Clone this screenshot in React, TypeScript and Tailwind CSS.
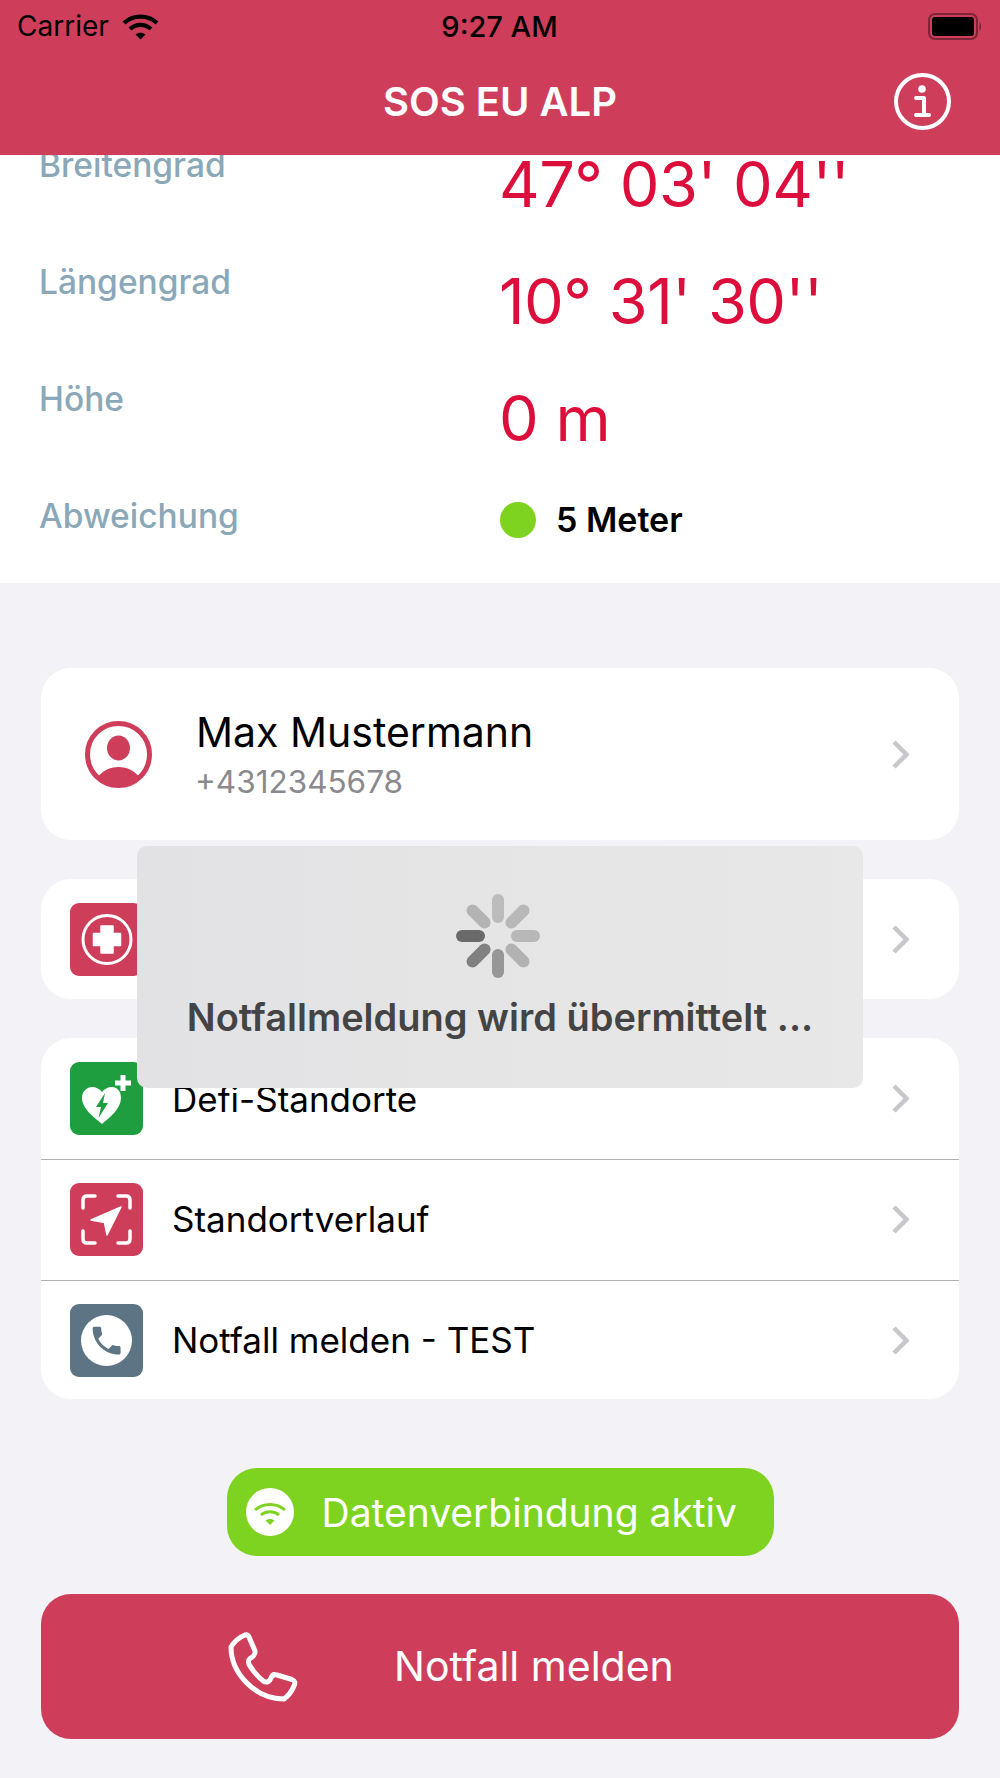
import type { ReactNode } from "react";

const font = "font-['Inter','Liberation_Sans',sans-serif]";

function StatusWifi() {
  return (
    <svg width="37" height="27" viewBox="0 0 37 27" fill="none" stroke="#000" strokeWidth="4.2">
      <path d="M2 10 C11 1.500 26 1.500 35 10" />
      <path d="M8 16 C14 10.500 23 10.500 29 16" />
      <path d="M18.500 26.500 L13.500 21.500 C16.500 19 20.500 19 23.500 21.500 Z" fill="#000" stroke="none" />
    </svg>
  );
}

function Battery() {
  return (
    <svg width="54" height="27" viewBox="0 0 54 27">
      <rect x="1" y="1" width="48" height="25" rx="6" fill="none" stroke="#000" strokeOpacity="0.4" strokeWidth="2" />
      <rect x="4" y="4" width="42" height="19" rx="3" fill="#000" />
      <path d="M51.500 9.500 C53.500 10.500 53.500 16.500 51.500 17.500 Z" fill="#000" fillOpacity="0.45" />
    </svg>
  );
}

function InfoIcon() {
  return (
    <svg width="57" height="57" viewBox="0 0 57 57" fill="none">
      <circle cx="28.500" cy="28.500" r="26.500" stroke="#fff" strokeWidth="4" />
      <circle cx="28" cy="16" r="3.800" fill="#fff" />
      <path d="M22 25 H30 V41 M22 42 H35" stroke="#fff" strokeWidth="4" strokeLinecap="round" strokeLinejoin="round" />
    </svg>
  );
}

function AvatarIcon() {
  return (
    <svg width="67" height="67" viewBox="0 0 67 67" className="shrink-0">
      <circle cx="33.500" cy="33.500" r="31" fill="none" stroke="#ce3e5b" strokeWidth="5" />
      <ellipse cx="33.500" cy="27" rx="11.500" ry="12.500" fill="#ce3e5b" />
      <path d="M13 56 C17 50 25 46 33.500 46 C42 46 50 50 54 56 C48 62 41 65 33.500 65 C26 65 19 62 13 56 Z" fill="#ce3e5b" />
    </svg>
  );
}

function MedicalIcon() {
  return (
    <svg width="73" height="73" viewBox="0 0 73 73">
      <circle cx="37" cy="36.500" r="24" fill="none" stroke="#fff" strokeWidth="3" />
      <path d="M31 23 H43 V30.500 H50.500 V42.500 H43 V50 H31 V42.500 H23.500 V30.500 H31 Z" fill="#fff" stroke="#fff" strokeWidth="1.500" strokeLinejoin="round" />
    </svg>
  );
}

function DefiIcon() {
  return (
    <svg width="73" height="73" viewBox="0 0 73 73">
      <path d="M32 62 C25 56 12 47 12 36 C12 29 17 25 22 25 C26 25 30 27 32 30 C34 27 38 25 42 25 C47 25 51 29 51 36 C51 47 39 56 32 62 Z" fill="#fff" />
      <path d="M35 31 L26 45 H31 L28.500 56 L38 41 H33 Z" fill="#1e9e3e" />
      <path d="M53 13 V29 M45 21 H61" stroke="#fff" strokeWidth="5" fill="none" />
    </svg>
  );
}

function LocationIcon() {
  return (
    <svg width="73" height="73" viewBox="0 0 73 73" fill="none">
      <path d="M13 25 V17 C13 14.500 14.500 13 17 13 H25 M48 13 H56 C58.500 13 60 14.500 60 17 V25 M13 48 V56 C13 58.500 14.500 60 17 60 H25 M48 60 H56 C58.500 60 60 58.500 60 56 V48" stroke="#fff" strokeWidth="3.500" strokeLinecap="round" />
      <path d="M51 24 L37 52 L34.500 39.500 L21 37 Z" fill="#fff" stroke="#fff" strokeWidth="1.500" strokeLinejoin="round" />
    </svg>
  );
}

function PhoneCircleIcon() {
  return (
    <svg width="73" height="73" viewBox="0 0 73 73">
      <circle cx="36.500" cy="36.500" r="25.500" fill="#fff" />
      <g transform="translate(18 18) scale(1.550)">
        <path d="M6.620 10.790c1.440 2.830 3.760 5.140 6.590 6.590l2.200-2.200c.27-.27.67-.36 1.020-.24 1.120.37 2.330.57 3.570.57.550 0 1 .45 1 1V20c0 .55-.45 1-1 1-9.390 0-17-7.610-17-17 0-.55.45-1 1-1h3.500c.55 0 1 .45 1 1 0 1.250.2 2.450.57 3.570.11.35.03.74-.25 1.020l-2.200 2.200z" fill="#5d7485" />
      </g>
    </svg>
  );
}

function PillWifi() {
  return (
    <svg width="48" height="48" viewBox="0 0 48 48" className="shrink-0" fill="none">
      <circle cx="24" cy="24" r="24" fill="#fff" />
      <path d="M9 22 C17 14.500 31 14.500 39 22 M15 27 C20 22.500 28 22.500 33 27" stroke="#7ed321" strokeWidth="3" />
      <path d="M24 37 L19.500 32.500 C22 30.500 26 30.500 28.500 32.500 Z" fill="#7ed321" />
    </svg>
  );
}

function BigPhoneIcon() {
  return (
    <svg width="70" height="70" viewBox="0 0 70 70" className="shrink-0" fill="none">
      <path
        d="M3 15 C6 10 12 5 17 3 C19 2.500 20 3 21 5 L27 19 C27.500 22 25 25 22 26.500 C20 28 20 31 22 34 C26 40 31 46 36 49.500 C39 51 42 49 43 46 C44 43 46 42 49 43 L64 47.500 C67 48.500 67.500 51 66 54 C64 59 60 64 56 67 C28 67 3 42 3 15 Z"
        stroke="#fff"
        strokeWidth="5"
        strokeLinejoin="round"
      />
    </svg>
  );
}

function Spinner() {
  const spokes = ["#6a6a6a", "#b3b3b3", "#bcbcbc", "#b8b8b8", "#b8b8b8", "#b2b2b2", "#979797", "#808080"];
  return (
    <svg width="96" height="96" viewBox="0 0 96 96" className="mr-[4px]">
      {spokes.map((c, i) => (
        <line key={i} x1="12" y1="48" x2="29" y2="48" stroke={c} strokeWidth="12" strokeLinecap="round" transform={`rotate(${i * 45} 48 48)`} />
      ))}
    </svg>
  );
}

function Chevron() {
  return (
    <svg width="17" height="29" viewBox="0 0 17 29" fill="none" className="shrink-0">
      <path d="M2 2 L14.500 14.500 L2 27" stroke="#c7c7cc" strokeWidth="4.500" />
    </svg>
  );
}

function CoordRow({ label, value }: { label: string; value: string }) {
  return (
    <div className="flex h-[117px] items-start">
      <div className="w-[500px] pt-[20px] pl-[39px] text-[33.5px] leading-[40px] font-medium text-[#8aa8b8]">{label}</div>
      <div className="-ml-[1px] pt-[24px] text-[63px] leading-[70px] tracking-[-0.5px] text-[#dc0e3c]">{value}</div>
    </div>
  );
}

function ListRow({ icon, iconBg, label, divider, h }: { icon: ReactNode; iconBg: string; label: string; divider?: boolean; h: string }) {
  return (
    <div className={`flex items-center pr-[50px] pl-[29px] ${h} ${divider ? "border-b border-[#b0b0b3]" : ""}`}>
      <div className={`h-[73px] w-[73px] shrink-0 rounded-[9px] ${iconBg}`}>{icon}</div>
      <span className="ml-[29px] flex-1 text-[35px] leading-[44px] text-black">{label}</span>
      <Chevron />
    </div>
  );
}

export default function App() {
  return (
    <div className={`relative flex h-[1778px] w-[1000px] flex-col overflow-hidden bg-[#f2f2f7] ${font}`}>
      <header className="z-10 h-[155px] shrink-0 bg-[#ce3e5b]">
        <div className="grid h-[52px] grid-cols-[1fr_auto_1fr] items-center pr-[18px] pl-[17px] text-black">
          <div className="flex items-center gap-[13px] text-[28px] leading-none">
            Carrier
            <StatusWifi />
          </div>
          <span className="text-[29px] leading-none font-medium">9:27 AM</span>
          <div className="flex justify-end">
            <Battery />
          </div>
        </div>
        <div className="grid h-[99px] grid-cols-[1fr_auto_1fr] items-center">
          <div />
          <h1 className="text-[40px] leading-none font-semibold text-white">SOS EU ALP</h1>
          <div className="flex justify-end pr-[49px]">
            <InfoIcon />
          </div>
        </div>
      </header>

      <section className="h-[428px] shrink-0 overflow-hidden bg-white">
        <div className="-mt-[30px]">
          <CoordRow label="Breitengrad" value="47° 03' 04''" />
          <CoordRow label="Längengrad" value="10° 31' 30''" />
          <CoordRow label="Höhe" value="0 m" />
          <div className="flex items-start">
            <div className="w-[500px] pt-[20px] pl-[39px] text-[33.5px] leading-[40px] font-medium text-[#8aa8b8]">Abweichung</div>
            <div className="flex items-center pt-[26px]">
              <div className="h-[36px] w-[36px] rounded-full bg-[#7ed321]" />
              <span className="ml-[20px] text-[34px] leading-[36px] font-semibold text-black">5 Meter</span>
            </div>
          </div>
        </div>
      </section>

      <main className="flex flex-col px-[41px] pt-[85px]">
        <div className="flex h-[172px] items-center rounded-[30px] bg-white pr-[50px] pl-[44px]">
          <AvatarIcon />
          <div className="ml-[44px] flex-1">
            <div className="text-[41px] leading-[48px] text-black">Max Mustermann</div>
            <div className="mt-[8px] -ml-[1px] text-[31.5px] leading-[36px] text-[#8a8a8e]">+4312345678</div>
          </div>
          <Chevron />
        </div>

        <div className="mt-[39px] overflow-hidden rounded-[30px] bg-white">
          <ListRow h="h-[120px]" iconBg="bg-[#ce3e5b]" icon={<MedicalIcon />} label="Medizinische Daten" />
        </div>

        <div className="mt-[39px] overflow-hidden rounded-[30px] bg-white">
          <ListRow h="h-[122px]" divider iconBg="bg-[#1e9e3e]" icon={<DefiIcon />} label="Defi-Standorte" />
          <ListRow h="h-[121px] pb-[2px]" divider iconBg="bg-[#ce3e5b]" icon={<LocationIcon />} label="Standortverlauf" />
          <ListRow h="h-[118px]" iconBg="bg-[#5d7485]" icon={<PhoneCircleIcon />} label="Notfall melden - TEST" />
        </div>

        <div className="mt-[69px] flex h-[88px] w-[547px] items-center self-center rounded-[30px] bg-[#7ed321] pl-[19px]">
          <PillWifi />
          <span className="ml-[28px] text-[39px] leading-none text-white">Datenverbindung aktiv</span>
        </div>

        <button className="mt-[38px] flex h-[145px] items-center rounded-[30px] bg-[#ce3e5b] pl-[187px]">
          <BigPhoneIcon />
          <span className="ml-[96px] text-[41px] leading-none text-white">Notfall melden</span>
        </button>
      </main>

      {/* loading HUD sits over the list */}
      <div className="absolute top-[846px] left-[137px] z-20 flex h-[242px] w-[726px] flex-col items-center rounded-[10px] bg-linear-to-r from-[#e2e2e4] to-[#e8e8e8] pt-[42px]">
        <Spinner />
        <div className="mt-[10px] text-[38px] leading-[46px] font-semibold text-[#444]">Notfallmeldung wird übermittelt ...</div>
      </div>
    </div>
  );
}
